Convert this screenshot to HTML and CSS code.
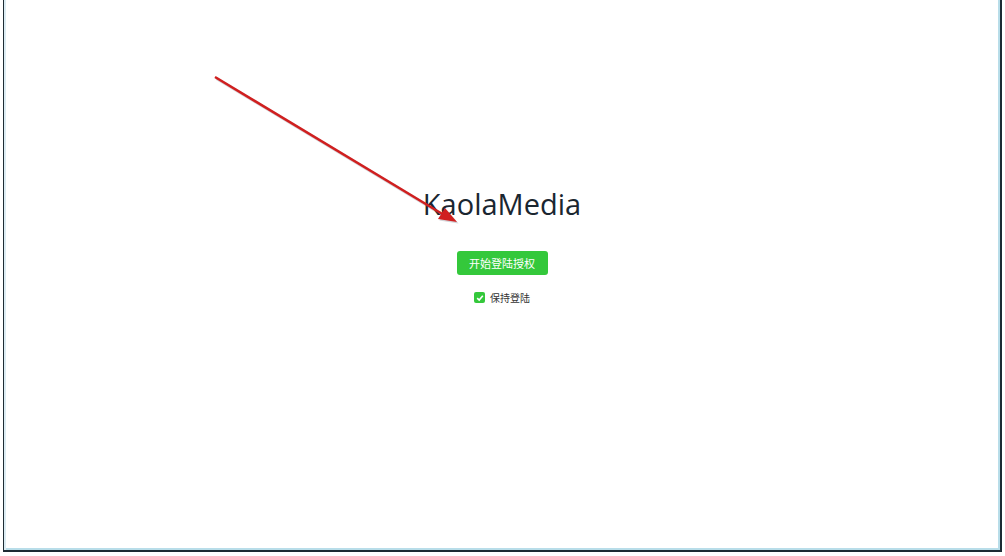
FILE: index.html
```html
<!DOCTYPE html>
<html>

<head>
    <title>KaolaMedia</title>
    <link rel="stylesheet" href="styles.css">
</head>

<body>
    <div class="frame">
        <div class="login">
            <h1 class="title">KaolaMedia</h1>
            <button class="start-btn" type="button">开始登陆授权</button>
            <label class="keep">
                <span class="check">
                    <svg width="8" height="8" viewBox="0 0 8 8">
                        <path d="M1.2 4.2 L3.2 6 L6.8 1.8" fill="none" stroke="#fff" stroke-width="1.6"/>
                    </svg>
                </span>
                <span class="keep-text">保持登陆</span>
            </label>
        </div>

        <!-- annotation arrow drawn over the page -->
        <svg class="arrow" width="1000" height="556" viewBox="0 0 1000 556">
            <g transform="translate(1.5 1.5)" opacity="0.25">
                <line x1="211" y1="77" x2="440" y2="215" stroke="#556" stroke-width="3"/>
                <path d="M453 222 L434 219 L441 208 Z" fill="#556"/>
            </g>
            <line x1="211" y1="77" x2="440" y2="215" stroke="#d01f1f" stroke-width="2.5"/>
            <path d="M453 222 L434 219 L441 208 Z" fill="#d01f1f"/>
        </svg>
    </div>
</body>

</html>
```

FILE: styles.css
```css
body {
    margin: 0;
    background: #fff;
    font-family: "Open Sans", "Noto Sans CJK SC", sans-serif;
}

.frame {
    position: relative;
    box-sizing: border-box;
    margin-left: 3px;
    width: 999px;
    height: 552px;
    border-left: 1px solid #1d2b33;
    border-right: 2px solid #1d2b33;
    border-bottom: 2px solid #1d2b33;
    box-shadow: inset 2px 0 #dcecf3, inset -2px -2px #b8dde9;
}

.login {
    display: flex;
    flex-direction: column;
    align-items: center;
    padding-top: 184px;
}

.title {
    margin: 0;
    font-size: 29px;
    line-height: 40px;
    font-weight: 500;
    color: #1a2630;
}

.start-btn {
    margin-top: 27px;
    width: 91px;
    height: 24px;
    padding: 0;
    border: none;
    border-radius: 3px;
    background: #34c83b;
    color: #fff;
    font-family: "Noto Sans CJK SC", sans-serif;
    font-size: 11px;
}

.keep {
    display: flex;
    align-items: center;
    gap: 5px;
    margin-top: 15px;
    font-family: "Noto Sans CJK SC", sans-serif;
    font-size: 10px;
    color: #333;
}

.check {
    display: flex;
    align-items: center;
    justify-content: center;
    width: 11px;
    height: 11px;
    border-radius: 2px;
    background: #34c83b;
}

.arrow {
    position: absolute;
    left: 0;
    top: 0;
    pointer-events: none;
}
```
